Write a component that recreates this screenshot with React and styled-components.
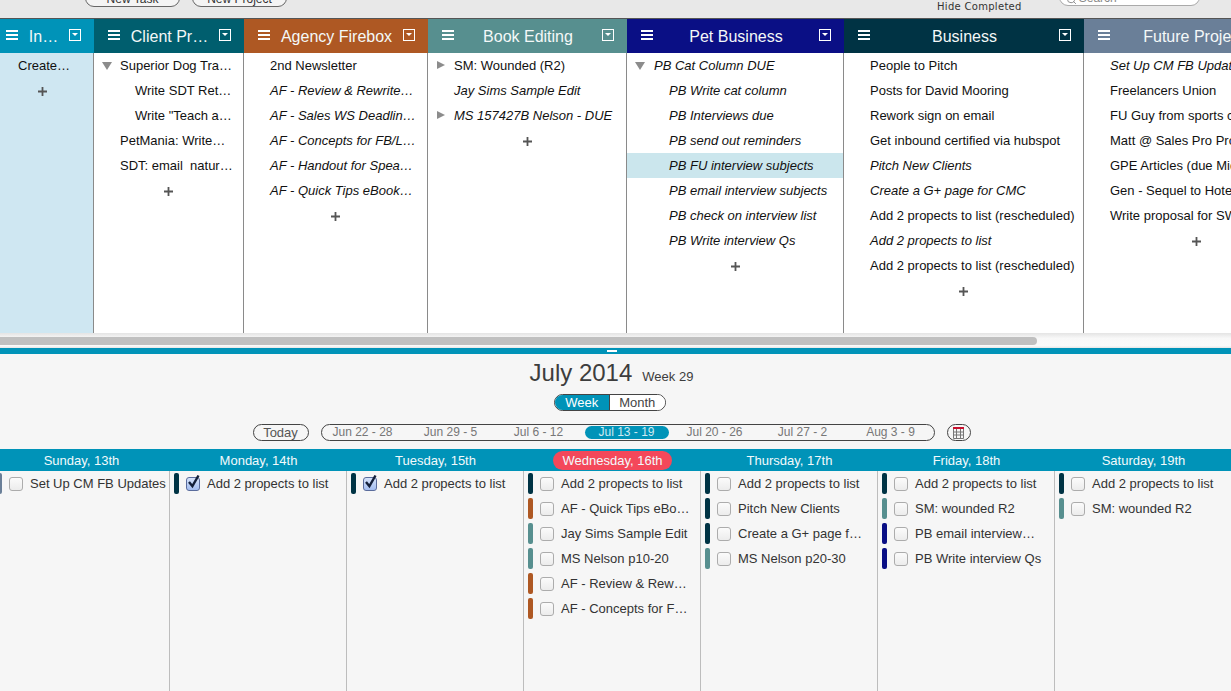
import styled, { createGlobalStyle } from 'styled-components';
import { Search } from 'lucide-react';

const GlobalStyle = createGlobalStyle`
  html, body {
    margin: 0;
    padding: 0;
    height: 100%;
    overflow: hidden;
    background: #f6f6f6;
    font-family: "Liberation Sans", Arial, sans-serif;
  }
`;

const columns = [
  {
    title: 'In…', width: 102, color: '#0093b8', tint: '#cfe7f2',
    rows: [{ text: 'Create…' }],
  },
  {
    title: 'Client Pr…', width: 150, color: '#005e6e',
    rows: [
      { text: 'Superior Dog Tra…', toggle: 'open' },
      { text: 'Write SDT Ret…', child: true },
      { text: 'Write "Teach a…', child: true },
      { text: 'PetMania: Write…' },
      { text: 'SDT: email  natur…' },
    ],
  },
  {
    title: 'Agency Firebox', width: 184, color: '#ae5823',
    rows: [
      { text: '2nd Newsletter' },
      { text: 'AF - Review & Rewrite…', italic: true },
      { text: 'AF - Sales WS Deadlin…', italic: true },
      { text: 'AF - Concepts for FB/L…', italic: true },
      { text: 'AF - Handout for Spea…', italic: true },
      { text: 'AF - Quick Tips eBook…', italic: true },
    ],
  },
  {
    title: 'Book Editing', width: 199, color: '#578f8f',
    rows: [
      { text: 'SM: Wounded (R2)', toggle: 'closed' },
      { text: 'Jay Sims Sample Edit', italic: true },
      { text: 'MS 157427B Nelson - DUE', italic: true, toggle: 'closed' },
    ],
  },
  {
    title: 'Pet Business', width: 217, color: '#0a0f85', indent: 1,
    rows: [
      { text: 'PB Cat Column DUE', italic: true, toggle: 'open' },
      { text: 'PB Write cat column', italic: true, child: true },
      { text: 'PB Interviews due', italic: true, child: true },
      { text: 'PB send out reminders', italic: true, child: true },
      { text: 'PB FU interview subjects', italic: true, child: true, selected: true },
      { text: 'PB email interview subjects', italic: true, child: true },
      { text: 'PB check on interview list', italic: true, child: true },
      { text: 'PB Write interview Qs', italic: true, child: true },
    ],
  },
  {
    title: 'Business', width: 240, color: '#003344',
    rows: [
      { text: 'People to Pitch' },
      { text: 'Posts for David Mooring' },
      { text: 'Rework sign on email' },
      { text: 'Get inbound certified via hubspot' },
      { text: 'Pitch New Clients', italic: true },
      { text: 'Create a G+ page for CMC', italic: true },
      { text: 'Add 2 propects to list (rescheduled)' },
      { text: 'Add 2 propects to list', italic: true },
      { text: 'Add 2 propects to list (rescheduled)' },
    ],
  },
  {
    title: 'Future Projects', width: 226, color: '#6a7f98',
    rows: [
      { text: 'Set Up CM FB Updates', italic: true },
      { text: 'Freelancers Union' },
      { text: 'FU Guy from sports col' },
      { text: 'Matt @ Sales Pro Project' },
      { text: 'GPE Articles (due Mid' },
      { text: 'Gen - Sequel to Hotel' },
      { text: 'Write proposal for SW' },
    ],
  },
];

const days = [
  { label: 'Sunday, 13th', tasks: [{ text: 'Set Up CM FB Updates', color: '#6a7f98' }] },
  { label: 'Monday, 14th', tasks: [{ text: 'Add 2 propects to list', color: '#003344', done: true }] },
  { label: 'Tuesday, 15th', tasks: [{ text: 'Add 2 propects to list', color: '#003344', done: true }] },
  {
    label: 'Wednesday, 16th',
    today: true,
    tasks: [
      { text: 'Add 2 propects to list', color: '#003344' },
      { text: 'AF - Quick Tips eBo…', color: '#ae5823' },
      { text: 'Jay Sims Sample Edit', color: '#578f8f' },
      { text: 'MS Nelson p10-20', color: '#578f8f' },
      { text: 'AF - Review & Rew…', color: '#ae5823' },
      { text: 'AF - Concepts for F…', color: '#ae5823' },
    ],
  },
  {
    label: 'Thursday, 17th',
    tasks: [
      { text: 'Add 2 propects to list', color: '#003344' },
      { text: 'Pitch New Clients', color: '#003344' },
      { text: 'Create a G+ page f…', color: '#003344' },
      { text: 'MS Nelson p20-30', color: '#578f8f' },
    ],
  },
  {
    label: 'Friday, 18th',
    tasks: [
      { text: 'Add 2 propects to list', color: '#003344' },
      { text: 'SM: wounded R2', color: '#578f8f' },
      { text: 'PB email interview…', color: '#0a0f85' },
      { text: 'PB Write interview Qs', color: '#0a0f85' },
    ],
  },
  {
    label: 'Saturday, 19th',
    tasks: [
      { text: 'Add 2 propects to list', color: '#003344' },
      { text: 'SM: wounded R2', color: '#578f8f' },
    ],
  },
];

const weeks = ['Jun 22 - 28', 'Jun 29 - 5', 'Jul 6 - 12', 'Jul 13 - 19', 'Jul 20 - 26', 'Jul 27 - 2', 'Aug 3 - 9'];

const Page = styled.div`
  width: 100%;
  height: 100vh;
  display: flex;
  flex-direction: column;
  overflow: hidden;
  background: #f6f6f6;
`;

const Toolbar = styled.div`
  flex: none;
  height: 18px;
  box-sizing: border-box;
  display: flex;
  align-items: flex-end;
  background: #e8e8e8;
  overflow: hidden;
`;

const ToolButton = styled.div`
  flex: none;
  width: ${props => props.$width}px;
  height: 20px;
  margin: 0 0 11px ${props => props.$left}px;
  box-sizing: border-box;
  border: 1px solid #666;
  border-radius: 9px;
  background: #f4f4f4;
  color: #333;
  font-size: 12px;
  line-height: 23px;
  text-align: center;
`;

const HideLabel = styled.div`
  flex: none;
  margin: 0 0 5px 650px;
  font-family: "DejaVu Sans", sans-serif;
  font-size: 10px;
  line-height: 12px;
  letter-spacing: 0.3px;
  color: #333;
`;

const SearchField = styled.div`
  flex: none;
  width: 141px;
  height: 20px;
  margin: 0 0 12px 37px;
  padding: 0 0 0 6px;
  box-sizing: border-box;
  border: 1px solid #aaa;
  border-radius: 9px;
  background: #fff;
  color: #888;
  font-size: 12px;
  line-height: 14px;
  display: flex;
  align-items: flex-end;
  gap: 2px;
`;

const Board = styled.div`
  flex: none;
  height: 315px;
  box-sizing: border-box;
  border-top: 1px solid #555;
  display: flex;
  margin-left: -8px;
  background: #fff;
`;

const Column = styled.section`
  flex: none;
  width: ${props => props.$width}px;
  box-sizing: border-box;
  border-right: 1px solid #8a8a8a;
  background: ${props => props.$tint || '#fff'};
`;

const ColumnHead = styled.header`
  height: 34px;
  display: flex;
  align-items: center;
  padding: 0 13px 0 14px;
  background: ${props => props.$color};
  margin-right: -1px;
`;

const Burger = styled.span`
  flex: none;
  width: 12px;
  height: 10px;
  margin-top: -2px;
  border-top: 2px solid #fff;
  border-bottom: 2px solid #fff;
  box-sizing: border-box;
  position: relative;

  &::before {
    content: '';
    position: absolute;
    left: 0;
    right: 0;
    top: 2px;
    height: 2px;
    background: #fff;
  }
`;

const ColumnTitle = styled.h2`
  flex: 1;
  margin: 2px 0 0;
  min-width: 0;
  color: #f4f8f8;
  font-size: 16px;
  font-weight: 400;
  line-height: 32px;
  text-align: center;
  white-space: nowrap;
`;

const MenuBox = styled.span`
  flex: none;
  width: 12px;
  height: 12px;
  margin-top: -2px;
  box-sizing: border-box;
  border: 1px solid #fff;
  display: flex;
  justify-content: center;
  padding-top: 3px;

  &::before {
    content: '';
    width: 0;
    height: 0;
    border-left: 3px solid transparent;
    border-right: 3px solid transparent;
    border-top: 3px solid #fff;
  }
`;

const Row = styled.div`
  height: 25px;
  position: relative;
  padding-left: ${props => (props.$child ? 41 : 26) + (props.$indent || 0)}px;
  background: ${props => (props.$selected ? '#cbe6ed' : 'transparent')};
  color: #111;
  font-size: 13px;
  font-style: ${props => (props.$italic ? 'italic' : 'normal')};
  line-height: 25px;
  white-space: pre;
  overflow: hidden;
`;

const Disclosure = styled.span`
  position: absolute;
  width: 0;
  height: 0;
  ${props =>
    props.$open
      ? `border-left: 5px solid transparent;
         border-right: 5px solid transparent;
         border-top: 8px solid #8c8c8c;
         top: 9px;
         left: 8px;`
      : `border-top: 4.5px solid transparent;
         border-bottom: 4.5px solid transparent;
         border-left: 8px solid #8c8c8c;
         top: 8px;
         left: 9px;`}
`;

const AddRow = styled.div`
  height: 25px;
  box-sizing: border-box;
  padding-top: 2px;
  display: flex;
  align-items: center;
  justify-content: center;
`;

const ScrollTrack = styled.div`
  flex: none;
  height: 15px;
  box-sizing: border-box;
  padding-top: 4px;
  background: linear-gradient(#e4e4e4, #f8f8f8 35%, #fafafa 85%, #e6e6e6);
`;

const ScrollThumb = styled.div`
  width: 1037px;
  height: 8px;
  border-radius: 0 4px 4px 0;
  background: #c0c0c0;
`;

const Divider = styled.div`
  flex: none;
  height: 6px;
  position: relative;
  background: #0093b8;

  &::after {
    content: '';
    position: absolute;
    left: 607px;
    top: 2px;
    width: 10px;
    height: 2px;
    background: #fff;
  }
`;

const CalendarHead = styled.div`
  flex: none;
  height: 95px;
  box-sizing: border-box;
  padding: 4px 8px 0 0;
  display: flex;
  flex-direction: column;
  align-items: center;
`;

const MonthLine = styled.div`
  height: 30px;
  display: flex;
  align-items: baseline;
  gap: 10px;
  color: #3d3d3d;
`;

const MonthName = styled.span`
  font-size: 24px;
  line-height: 30px;
`;

const WeekNumber = styled.span`
  font-size: 13px;
`;

const ViewToggle = styled.div`
  width: 112px;
  height: 17px;
  margin: 6px 4px 0 0;
  box-sizing: border-box;
  border: 1px solid #444;
  border-radius: 9px;
  display: flex;
  overflow: hidden;
  background: #fff;
`;

const ViewOption = styled.span`
  flex: 1;
  background: ${props => (props.$active ? '#0093b8' : '#fff')};
  border-left: ${props => (props.$active ? 'none' : '1px solid #444')};
  color: ${props => (props.$active ? '#fff' : '#444')};
  font-size: 13px;
  line-height: 15px;
  text-align: center;
`;

const NavRow = styled.div`
  height: 17px;
  margin-top: 13px;
  display: flex;
  gap: 12px;
`;

const PillButton = styled.div`
  flex: none;
  width: ${props => props.$width}px;
  height: 17px;
  box-sizing: border-box;
  border: 1px solid #444;
  border-radius: 9px;
  color: #555;
  font-size: 13px;
  line-height: 15px;
  text-align: center;
  display: flex;
  align-items: center;
  justify-content: center;
`;

const WeekStrip = styled.div`
  flex: none;
  width: 614px;
  height: 17px;
  box-sizing: border-box;
  border: 1px solid #444;
  border-radius: 9px;
`;

const WeekGrid = styled.div`
  margin-left: -3px;
  display: grid;
  grid-template-columns: repeat(7, 88px);
  align-items: center;
  height: 15px;
`;

const WeekItem = styled.span`
  margin: 0 2px;
  height: 13px;
  border-radius: 7px;
  background: ${props => (props.$active ? '#0093b8' : 'transparent')};
  color: ${props => (props.$active ? '#cfeaf2' : '#777')};
  font-size: 12px;
  line-height: 13px;
  text-align: center;
`;

const DayGrid = styled.div`
  flex: 1;
  min-height: 0;
  margin-left: -7px;
  display: grid;
  grid-template-columns: repeat(7, 177px);
  grid-template-rows: 22px 1fr;
`;

const DayHead = styled.div`
  background: #0093b8;
  display: flex;
  align-items: center;
  justify-content: center;
  color: #f2fafc;
  font-size: 13px;
`;

const DayLabel = styled.span`
  height: 19px;
  padding: 0 ${props => (props.$today ? 10 : 0)}px;
  border-radius: 10px;
  background: ${props => (props.$today ? '#f4485a' : 'transparent')};
  line-height: 19px;
`;

const DayColumn = styled.div`
  box-sizing: border-box;
  border-right: 1px solid #bdbdbd;
  padding-left: 4px;
`;

const Task = styled.div`
  height: 25px;
  display: flex;
  align-items: center;
  gap: 7px;
  color: #333;
  font-size: 13px;
  white-space: nowrap;
`;

const TaskBar = styled.span`
  flex: none;
  width: 5px;
  height: 21px;
  border-radius: 2px;
  background: ${props => props.$color};
`;

const CheckBox = styled.span`
  flex: none;
  width: 14px;
  height: 14px;
  box-sizing: border-box;
  border: 1px solid ${props => (props.$done ? '#5a6c9c' : '#acacac')};
  border-radius: 3px;
  background: ${props =>
    props.$done
      ? 'linear-gradient(#d6e3fa, #a3bdf0)'
      : 'linear-gradient(#fbfbfb, #ececec)'};
  position: relative;
`;

const CheckMark = styled.svg`
  position: absolute;
  left: -1px;
  top: -4px;
  width: 14px;
  height: 15px;
`;

const PlusIcon = () => (
  <svg width="9" height="9" viewBox="0 0 9 9">
    <path d="M3.6 0h1.8v3.6H9v1.8H5.4V9H3.6V5.4H0V3.6h3.6z" fill="#555" />
  </svg>
);

const CalendarIcon = () => (
  <svg width="11" height="12" viewBox="0 0 11 12">
    <rect x="0" y="0" width="11" height="2" fill="#c8102e" />
    <path d="M.5 2v9.5h10V2M3.5 2v9.5M7.5 2v9.5M.5 5h10M.5 8h10" fill="none" stroke="#777" />
  </svg>
);

export default function App() {
  return (
    <>
      <GlobalStyle />
      <Page>
        <Toolbar>
          <ToolButton $left={85} $width={95}>New Task</ToolButton>
          <ToolButton $left={12} $width={95}>New Project</ToolButton>
          <HideLabel>Hide Completed</HideLabel>
          <SearchField>
            <Search size={11} strokeWidth={2} color="#888" />
            Search
          </SearchField>
        </Toolbar>

        <Board>
          {columns.map(col => (
            <Column key={col.title} $width={col.width} $tint={col.tint}>
              <ColumnHead $color={col.color}>
                <Burger />
                <ColumnTitle>{col.title}</ColumnTitle>
                <MenuBox />
              </ColumnHead>
              {col.rows.map(row => (
                <Row
                  key={row.text}
                  $child={row.child}
                  $italic={row.italic}
                  $selected={row.selected}
                  $indent={col.indent}
                >
                  {row.toggle && <Disclosure $open={row.toggle === 'open'} />}
                  {row.text}
                </Row>
              ))}
              <AddRow><PlusIcon /></AddRow>
            </Column>
          ))}
        </Board>

        <ScrollTrack><ScrollThumb /></ScrollTrack>
        <Divider />

        <CalendarHead>
          <MonthLine>
            <MonthName>July 2014</MonthName>
            <WeekNumber>Week 29</WeekNumber>
          </MonthLine>
          <ViewToggle>
            <ViewOption $active>Week</ViewOption>
            <ViewOption>Month</ViewOption>
          </ViewToggle>
          <NavRow>
            <PillButton $width={56}>Today</PillButton>
            <WeekStrip>
              <WeekGrid>
                {weeks.map(week => (
                  <WeekItem key={week} $active={week === 'Jul 13 - 19'}>{week}</WeekItem>
                ))}
              </WeekGrid>
            </WeekStrip>
            <PillButton $width={24}><CalendarIcon /></PillButton>
          </NavRow>
        </CalendarHead>

        <DayGrid>
          {days.map(day => (
            <DayHead key={day.label}>
              <DayLabel $today={day.today}>{day.label}</DayLabel>
            </DayHead>
          ))}
          {days.map(day => (
            <DayColumn key={day.label}>
              {day.tasks.map(task => (
                <Task key={task.text}>
                  <TaskBar $color={task.color} />
                  <CheckBox $done={task.done}>
                    {task.done && (
                      <CheckMark viewBox="0 0 14 15">
                        <path d="M3 8l3.4 4.2L12.5 1.5" fill="none" stroke="#14203a" strokeWidth="2.4" />
                      </CheckMark>
                    )}
                  </CheckBox>
                  {task.text}
                </Task>
              ))}
            </DayColumn>
          ))}
        </DayGrid>
      </Page>
    </>
  );
}
